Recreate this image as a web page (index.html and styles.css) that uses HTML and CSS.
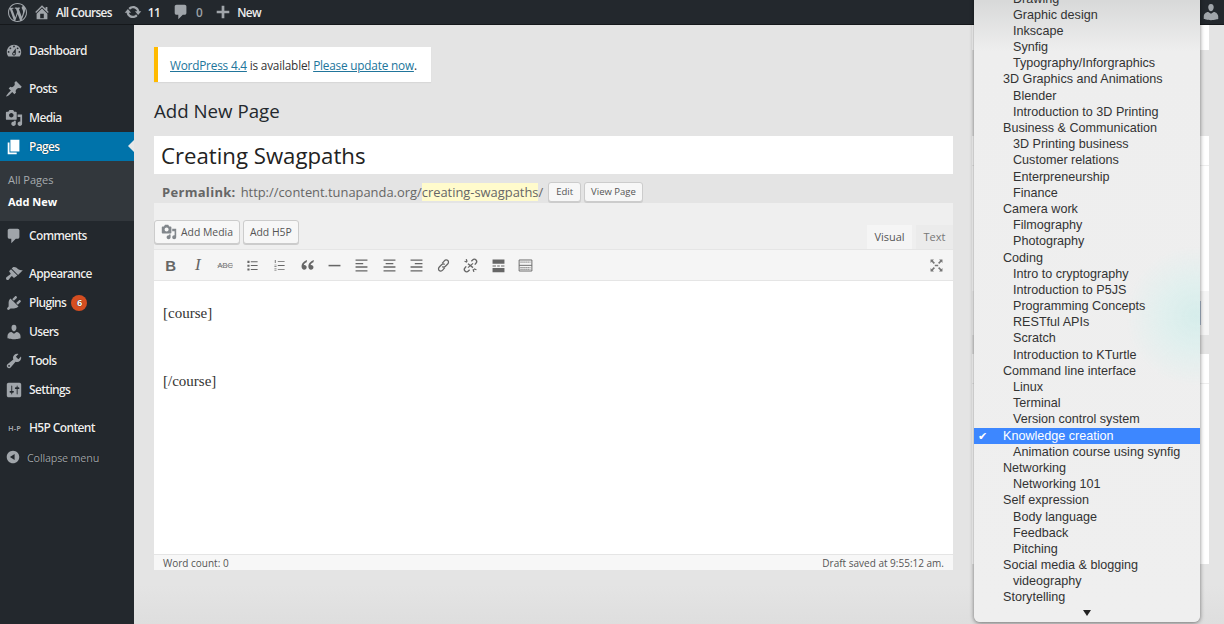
FILE: index.html
```html
<!DOCTYPE html>
<html lang="en">
<head>
<meta charset="utf-8">
<title>Add New Page</title>
<link rel="stylesheet" href="styles.css">
</head>
<body>
<svg class="defs" width="0" height="0" aria-hidden="true">
  <symbol id="i-media" viewBox="0 0 20 20"><path d="M13 11V4c0-.55-.45-1-1-1h-1.67L9 1H5L3.67 3H2c-.55 0-1 .45-1 1v7c0 .55.45 1 1 1h10c.55 0 1-.45 1-1zM7 4.5c1.38 0 2.5 1.12 2.5 2.5S8.38 9.5 7 9.5 4.5 8.38 4.5 7 5.62 4.5 7 4.5zM14 6h5v10.5c0 1.38-1.12 2.5-2.5 2.5S14 17.88 14 16.5s1.12-2.5 2.5-2.5c.17 0 .34.02.5.05V9h-3V6zm-4 8.05V13h2v3.5c0 1.38-1.12 2.5-2.5 2.5S7 17.88 7 16.5 8.12 14 9.5 14c.17 0 .34.02.5.05z"/></symbol>
  <symbol id="i-user" viewBox="0 0 20 20"><path d="M10 9.25c-2.27 0-2.73-3.44-2.73-3.44C7 4.02 7.82 2 9.97 2c2.16 0 2.98 2.02 2.71 3.81 0 0-.41 3.44-2.68 3.44zm0 2.57L12.72 10c2.39 0 4.52 2.33 4.52 4.53v2.49s-3.65 1.13-7.24 1.13c-3.65 0-7.24-1.13-7.24-1.13v-2.49c0-2.25 1.94-4.48 4.47-4.48z"/></symbol>
</svg>
<header class="adminbar">
  <span class="ab-item ab-logo"><svg class="ab-icon" viewBox="0 0 20 20"><path d="M20 10c0-5.51-4.49-10-10-10C4.48 0 0 4.49 0 10c0 5.52 4.48 10 10 10 5.51 0 10-4.48 10-10zM7.78 15.37L4.37 6.22c.55-.02 1.17-.08 1.17-.08.5-.06.44-1.13-.06-1.11 0 0-1.45.11-2.37.11-.18 0-.37 0-.58-.01C4.12 2.69 6.87 1.11 10 1.11c2.33 0 4.45.87 6.05 2.34-.68-.11-1.65.39-1.65 1.58 0 .74.45 1.36.9 2.1.35.61.55 1.36.55 2.46 0 1.49-1.4 5-1.4 5l-3.03-8.37c.54-.02.82-.17.82-.17.5-.05.44-1.25-.06-1.22 0 0-1.44.12-2.38.12-.87 0-2.33-.12-2.33-.12-.5-.03-.56 1.2-.06 1.22l.92.08 1.26 3.41zM17.41 10c.24-.64.74-1.87.43-4.25.7 1.29 1.05 2.71 1.05 4.25 0 3.29-1.73 6.24-4.4 7.78.97-2.59 1.94-5.2 2.92-7.78zM6.1 18.09C3.12 16.65 1.11 13.53 1.11 10c0-1.3.23-2.48.72-3.59C3.25 10.3 4.67 14.2 6.1 18.09zm4.03-6.63l2.58 6.98c-.86.29-1.76.45-2.71.45-.79 0-1.57-.11-2.29-.33.81-2.38 1.62-4.74 2.42-7.1z"/></svg></span>
  <span class="ab-item ab-site"><svg class="ab-icon" viewBox="0 0 20 20"><path d="M16 8.5l1.53 1.53-1.06 1.06L10 4.62l-6.47 6.47-1.06-1.06L10 2.5l4 4v-2h2v4zm-6-2.46l6 5.99V18H4v-5.97zM12 17v-5H8v5h4z"/></svg><b>All Courses</b></span>
  <span class="ab-item ab-updates"><svg class="ab-icon" viewBox="0 0 20 20"><path d="M10.2 3.28c3.53 0 6.43 2.61 6.92 6h2.08l-3.5 4-3.5-4h2.32c-.45-1.97-2.21-3.45-4.32-3.45-1.45 0-2.73.71-3.54 1.78L4.95 5.66C6.23 4.2 8.11 3.28 10.2 3.28zm-.4 13.44c-3.52 0-6.43-2.61-6.92-6H.8l3.5-4c1.17 1.33 2.33 2.67 3.5 4H5.48c.45 1.97 2.21 3.45 4.32 3.45 1.45 0 2.73-.71 3.54-1.78l1.71 1.95c-1.28 1.46-3.15 2.38-5.25 2.38z"/></svg><b>11</b></span>
  <span class="ab-item ab-comments"><svg class="ab-icon" viewBox="0 0 20 20"><path d="M5 2h9c1.1 0 2 .9 2 2v7c0 1.1-.9 2-2 2h-2l-5 5v-5H5c-1.1 0-2-.9-2-2V4c0-1.1.9-2 2-2z"/></svg><b class="dim">0</b></span>
  <span class="ab-item ab-new"><svg class="ab-icon" viewBox="0 0 20 20"><path d="M17 8.5v3h-5.5V17h-3v-5.5H3v-3h5.5V3h3v5.5H17z"/></svg><b>New</b></span>
  <span class="ab-spacer"></span>
  <svg class="ab-icon ab-user"><use href="#i-user"/></svg>
</header>
<div class="shell">
  <nav class="sidebar">
    <a class="menu"><svg class="m-icon" viewBox="0 0 20 20"><path d="M3.76 16h12.48c1.1-1.37 1.76-3.11 1.76-5 0-4.42-3.58-8-8-8s-8 3.58-8 8c0 1.89.66 3.63 1.76 5zM10 4c.55 0 1 .45 1 1s-.45 1-1 1-1-.45-1-1 .45-1 1-1zM6 6c.55 0 1 .45 1 1s-.45 1-1 1-1-.45-1-1 .45-1 1-1zm8 0c.55 0 1 .45 1 1s-.45 1-1 1-1-.45-1-1 .45-1 1-1zm-5.37 5.55L12 7v6c0 1.1-.9 2-2 2s-2-.9-2-2c0-.57.24-1.08.63-1.45zM4 10c.55 0 1 .45 1 1s-.45 1-1 1-1-.45-1-1 .45-1 1-1zm12 0c.55 0 1 .45 1 1s-.45 1-1 1-1-.45-1-1 .45-1 1-1zm-5 3c0-.55-.45-1-1-1s-1 .45-1 1 .45 1 1 1 1-.45 1-1z"/></svg>Dashboard</a>
    <div class="sep"></div>
    <a class="menu"><svg class="m-icon" viewBox="0 0 20 20"><path d="M10.44 3.02l1.82-1.82 6.36 6.35-1.83 1.82c-1.05-.68-2.48-.57-3.41.36l-.75.75c-.92.93-1.04 2.35-.35 3.41l-1.83 1.82-2.41-2.41-2.8 2.79c-.42.42-3.38 2.71-3.8 2.29s1.86-3.39 2.28-3.81l2.79-2.79L4.1 9.36l1.83-1.82c1.05.69 2.48.57 3.4-.36l.75-.75c.93-.92 1.05-2.35.36-3.41z"/></svg>Posts</a>
    <a class="menu"><svg class="m-icon"><use href="#i-media"/></svg>Media</a>
    <a class="menu current"><svg class="m-icon" viewBox="0 0 20 20"><path d="M6 15V2h10v13H6zm-1 1h8v2H3V5h2v11z"/></svg>Pages</a>
    <div class="submenu">
      <a class="sub">All Pages</a>
      <a class="sub active">Add New</a>
    </div>
    <a class="menu"><svg class="m-icon" viewBox="0 0 20 20"><path d="M5 2h9c1.1 0 2 .9 2 2v7c0 1.1-.9 2-2 2h-2l-5 5v-5H5c-1.1 0-2-.9-2-2V4c0-1.1.9-2 2-2z"/></svg>Comments</a>
    <div class="sep"></div>
    <a class="menu"><svg class="m-icon" viewBox="0 0 20 20"><path d="M14.48 11.06L7.41 3.99l1.5-1.5c.5-.56 2.3-.47 3.51.32 1.21.8 1.43 1.28 2.91 2.1 1.18.64 2.45 1.26 4.45.85zm-.71.71L6.7 4.7 4.93 6.47c-.39.39-.39 1.02 0 1.41l1.06 1.06c.39.39.39 1.03 0 1.42-.6.6-1.43 1.11-2.21 1.69-.35.26-.7.53-1.01.84C1.43 13.23.4 14.96 1.69 16.25c.8.8 1.8.6 2.6-.2.31-.31.58-.66.84-1.01.58-.78 1.09-1.61 1.69-2.21.39-.39 1.03-.39 1.42 0l1.06 1.06c.39.39 1.02.39 1.41 0z"/></svg>Appearance</a>
    <a class="menu"><svg class="m-icon" viewBox="0 0 20 20"><path d="M13.11 4.36L9.87 7.6 8 5.73l3.24-3.24c.35-.34 1.05-.2 1.56.32.52.51.66 1.21.31 1.55zm-8 1.77l.91-1.12 9.01 9.01-1.19.84c-.71.71-2.63 1.16-3.82 1.16H6.14L4.9 17.26c-.59.59-1.54.59-2.12 0-.59-.58-.59-1.53 0-2.12l1.24-1.24v-3.88c0-1.13.4-3.19 1.09-3.89zm7.26 3.97l3.24-3.24c.34-.35 1.04-.21 1.55.31.52.51.66 1.21.31 1.55l-3.24 3.25z"/></svg>Plugins<span class="badge">6</span></a>
    <a class="menu"><svg class="m-icon"><use href="#i-user"/></svg>Users</a>
    <a class="menu"><svg class="m-icon" viewBox="0 0 20 20"><path d="M16.68 9.77c-1.34 1.34-3.3 1.67-4.95.99l-5.41 6.52c-.99.99-2.59.99-3.58 0s-.99-2.59 0-3.57l6.52-5.42c-.68-1.65-.35-3.61.99-4.95 1.28-1.28 3.12-1.62 4.72-1.06l-2.89 2.89 2.82 2.82 2.86-2.87c.53 1.58.18 3.39-1.08 4.65zM3.81 16.21c.4.39 1.04.39 1.43 0 .4-.4.4-1.04 0-1.43-.39-.4-1.03-.4-1.43 0-.39.39-.39 1.03 0 1.43z"/></svg>Tools</a>
    <a class="menu"><svg class="m-icon" viewBox="0 0 20 20"><path d="M18 16V4c0-1.1-.9-2-2-2H4c-1.1 0-2 .9-2 2v12c0 1.1.9 2 2 2h12c1.1 0 2-.9 2-2zM8 11h1c.55 0 1 .45 1 1s-.45 1-1 1H8v1.5c0 .28-.22.5-.5.5s-.5-.22-.5-.5V13H6c-.55 0-1-.45-1-1s.45-1 1-1h1V5.5c0-.28.22-.5.5-.5s.5.22.5.5V11zm5-2h-1c-.55 0-1-.45-1-1s.45-1 1-1h1V5.5c0-.28.22-.5.5-.5s.5.22.5.5V7h1c.55 0 1 .45 1 1s-.45 1-1 1h-1v5.5c0 .28-.22.5-.5.5s-.5-.22-.5-.5V9z"/></svg>Settings</a>
    <div class="sep"></div>
    <a class="menu"><span class="h5p-mark">H-P</span>H5P Content</a>
    <a class="menu collapse"><svg class="m-icon" viewBox="0 0 20 20"><path d="M10 2.16c4.33 0 7.84 3.51 7.84 7.84s-3.51 7.84-7.84 7.84S2.16 14.33 2.16 10 5.71 2.16 10 2.16zm2 11.72V6.12L6.18 9.97z"/></svg>Collapse menu</a>
  </nav>
  <main class="main">
    <section class="editor-col">
      <div class="notice"><a>WordPress 4.4</a> is available! <a>Please update now</a>.</div>
      <h1 class="page-title">Add New Page</h1>
      <div class="title-input">Creating Swagpaths</div>
      <div class="permalink"><strong>Permalink:</strong><span class="url">http://content.tunapanda.org/<span class="slug">creating-swagpaths</span>/</span><span class="btn-s btn-edit">Edit</span><span class="btn-s">View Page</span></div>
      <div class="editor">
        <div class="editor-head">
          <span class="btn"><svg class="btn-icon"><use href="#i-media"/></svg>Add Media</span>
          <span class="btn">Add H5P</span>
          <span class="tabs"><span class="tab on">Visual</span><span class="tab">Text</span></span>
        </div>
        <div class="toolbar">
          <span class="tool t-b">B</span>
          <span class="tool t-i">I</span>
          <span class="tool t-abc">ABC</span>
          <span class="tool"><svg class="t-svg" viewBox="0 0 20 20"><path d="M8 5h8v1.200H8zM8 9.500h8v1.200H8zM8 14h8v1.200H8zM4 4.500h2.500V7H4zM4 9h2.500v2.500H4zM4 13.500h2.500V16H4z"/></svg></span>
          <span class="tool"><svg class="t-svg" viewBox="0 0 20 20"><path d="M8 5h8v1H8zM8 9.500h8v1H8zM8 14h8v1H8zM4.500 3.500h1v3.500h-1zM4 9h2.500v.8H4zM4 11h2.500v.8H4zM4 13.500h2.500v.8H4zM4 15.500h2.500v.8H4z"/></svg></span>
          <span class="tool"><svg class="t-svg" viewBox="0 0 20 20"><path d="M9.500 3.500C6 4.800 3 7.300 3 11.300c0 2.300 1.300 3.700 3.100 3.700 1.700 0 2.900-1.200 2.900-2.800s-1.100-2.700-2.700-2.700c-.2 0-.5 0-.7.100.2-1.300 1.500-2.500 3.400-3.300zM17.500 3.500c-3.500 1.300-6.500 3.800-6.500 7.800 0 2.300 1.300 3.700 3.100 3.700 1.700 0 2.900-1.200 2.900-2.800s-1.100-2.700-2.700-2.700c-.2 0-.5 0-.7.100.2-1.300 1.500-2.500 3.400-3.300z"/></svg></span>
          <span class="tool"><svg class="t-svg" viewBox="0 0 20 20"><path d="M3 9.200h14v1.800H3z"/></svg></span>
          <span class="tool"><svg class="t-svg" viewBox="0 0 20 20"><path d="M3 3h14v1.500H3zM3 7h9v1.500H3zM3 11h14v1.500H3zM3 15.500h14V17H3z"/></svg></span>
          <span class="tool"><svg class="t-svg" viewBox="0 0 20 20"><path d="M3 3h14v1.500H3zM5.500 7h9v1.500h-9zM3 11h14v1.500H3zM3 15.500h14V17H3z"/></svg></span>
          <span class="tool"><svg class="t-svg" viewBox="0 0 20 20"><path d="M3 3h14v1.500H3zM8 7h9v1.500H8zM3 11h14v1.500H3zM3 15.500h14V17H3z"/></svg></span>
          <span class="tool"><svg class="t-svg t-line" viewBox="0 0 20 20"><path d="M8.500 7.500l2.500-3c1.200-1.300 3-1.400 4.100-.3s1 2.900-.2 4.100l-2.600 2.600c-1.200 1.200-2.700 1.200-3.700.2"/><path d="M11.500 12.500l-2.500 3c-1.200 1.300-3 1.400-4.100.3s-1-2.900.2-4.100l2.600-2.600c1.200-1.200 2.700-1.200 3.700-.2"/></svg></span>
          <span class="tool"><svg class="t-svg t-line" viewBox="0 0 20 20"><path d="M11 5l1.500-1.500c1.200-1.200 2.900-1.200 4 0s1 2.800-.1 3.900L15 9"/><path d="M9 15l-1.500 1.500c-1.200 1.200-2.900 1.200-4 0s-1-2.800.1-3.900L5 11"/><path d="M3 5l3 1M5 2.500l1 3M14 17.500l-1-3M17 15l-3-1M7 8l6 4.500M13 7.500l-6 5"/></svg></span>
          <span class="tool"><svg class="t-svg" viewBox="0 0 20 20"><path d="M3 3h14v5H3zM3 13h14v5H3zM3 10h4v1.200H3zM8.500 10h3v1.200h-3zM13 10h4v1.200h-4z"/></svg></span>
          <span class="tool"><svg class="t-svg t-thin" viewBox="0 0 20 20"><path d="M2.500 3.500h15v13h-15z"/><path d="M2.500 9.800h15"/><path d="M4 6h12M4 12.500h12M4 14.500h12" stroke-dasharray="1.500 .8"/></svg></span>
          <span class="tool tool-full"><svg class="t-svg" viewBox="0 0 20 20"><path d="M3 3h4l-1.300 1.300 2.500 2.500-1.400 1.400-2.500-2.500L3 7zM17 3v4l-1.300-1.300-2.500 2.500-1.400-1.400 2.500-2.500L13 3zM3 17v-4l1.300 1.300 2.500-2.500 1.400 1.400-2.500 2.500L7 17zM17 17h-4l1.300-1.300-2.500-2.500 1.400-1.400 2.500 2.500L17 13zM8 9h4v2H8z"/></svg></span>
        </div>
        <div class="content">
          <p>[course]</p>
          <p class="gap">[/course]</p>
        </div>
        <div class="status"><span>Word count: 0</span><span>Draft saved at 9:55:12 am.</span></div>
      </div>
    </section>
    <aside class="side-col">
      <div class="box box-a"></div>
      <div class="box box-b"><div class="box-head"></div></div>
      <div class="box box-c"><span class="side-btn"></span></div>
      <div class="box box-d"><div class="box-head"></div></div>
    </aside>
  </main>
</div>
<div class="dropdown">
  <div class="opt c">Drawing</div>
  <div class="opt c">Graphic design</div>
  <div class="opt c">Inkscape</div>
  <div class="opt c">Synfig</div>
  <div class="opt c">Typography/Inforgraphics</div>
  <div class="opt">3D Graphics and Animations</div>
  <div class="opt c">Blender</div>
  <div class="opt c">Introduction to 3D Printing</div>
  <div class="opt">Business &amp; Communication</div>
  <div class="opt c">3D Printing business</div>
  <div class="opt c">Customer relations</div>
  <div class="opt c">Enterpreneurship</div>
  <div class="opt c">Finance</div>
  <div class="opt">Camera work</div>
  <div class="opt c">Filmography</div>
  <div class="opt c">Photography</div>
  <div class="opt">Coding</div>
  <div class="opt c">Intro to cryptography</div>
  <div class="opt c">Introduction to P5JS</div>
  <div class="opt c">Programming Concepts</div>
  <div class="opt c">RESTful APIs</div>
  <div class="opt c">Scratch</div>
  <div class="opt c">Introduction to KTurtle</div>
  <div class="opt">Command line interface</div>
  <div class="opt c">Linux</div>
  <div class="opt c">Terminal</div>
  <div class="opt c">Version control system</div>
  <div class="opt sel"><span class="check">✔</span>Knowledge creation</div>
  <div class="opt c">Animation course using synfig</div>
  <div class="opt">Networking</div>
  <div class="opt c">Networking 101</div>
  <div class="opt">Self expression</div>
  <div class="opt c">Body language</div>
  <div class="opt c">Feedback</div>
  <div class="opt c">Pitching</div>
  <div class="opt">Social media &amp; blogging</div>
  <div class="opt c">videography</div>
  <div class="opt">Storytelling</div>
  <div class="more"><span class="arrow"></span></div>
</div>
</body>
</html>
```

FILE: styles.css
```css
* { box-sizing: border-box; }
html, body { margin: 0; height: 624px; overflow: hidden; }
body {
  position: relative;
  display: flex;
  flex-direction: column;
  background: #e3e3e3;
  font-family: "Open Sans", sans-serif;
  font-size: 13px;
  color: #444;
}
.defs { position: absolute; }

/* admin bar */
.adminbar {
  flex: none;
  height: 25px;
  display: flex;
  align-items: center;
  background: #23282d;
  border-bottom: 1px solid #15181b;
  color: #eee;
  font-size: 11.800px;
  letter-spacing: -.650px;
}
.adminbar b { font-weight: 600; }
.adminbar .dim { color: #9ca1a6; }
.ab-item { display: flex; align-items: center; }
.ab-icon { width: 18px; height: 18px; fill: #a0a5aa; flex: none; }
.ab-logo { margin-left: 8px; }
.ab-logo .ab-icon { width: 19px; height: 19px; }
.ab-site { margin-left: 6px; gap: 5px; }
.ab-updates { margin-left: 12px; gap: 6px; }
.ab-comments { margin-left: 12px; gap: 6px; }
.ab-new { margin-left: 12px; gap: 5px; }
.ab-spacer { flex: 1; }
.ab-user { margin-right: 3px; width: 20px; height: 20px; }

.shell { flex: 1; display: flex; min-height: 0; }

/* sidebar */
.sidebar {
  flex: none;
  width: 134px;
  padding-top: 11px;
  background: #23282d;
  color: #eee;
}
.menu {
  position: relative;
  display: flex;
  align-items: center;
  height: 29px;
  font-size: 12px;
  font-weight: 600;
  letter-spacing: -.650px;
  text-shadow: 0 0 1px #000;
}
.m-icon { width: 18px; height: 18px; margin: 0 6px 0 5px; fill: #a0a5aa; flex: none; }
.sep { height: 9px; }
.menu.current { background: #0073aa; color: #fff; }
.menu.current .m-icon { fill: #fff; }
.menu.current::after {
  content: "";
  position: absolute;
  right: 0;
  top: 8px;
  border: 6px solid transparent;
  border-left-width: 0;
  border-right-color: #e8e8e8;
}
.submenu {
  height: 60px;
  padding-top: 7px;
  background: #32373c;
}
.sub {
  display: flex;
  align-items: center;
  height: 22px;
  padding-left: 8px;
  font-size: 11px;
  color: #a6abaf;
}
.sub.active { color: #fff; font-weight: 700; }
.badge {
  display: flex;
  align-items: center;
  justify-content: center;
  width: 16px;
  height: 16px;
  margin-left: 5px;
  border-radius: 50%;
  background: #d54e21;
  color: #fff;
  font-size: 9px;
  font-weight: 700;
}
.h5p-mark {
  flex: none;
  width: 21px;
  margin-left: 8px;
  font-size: 7.500px;
  font-weight: 700;
  letter-spacing: 0;
  color: #a0a5aa;
}
.collapse { height: 30px; font-size: 10.800px; font-weight: 400; letter-spacing: -.2px; color: #a0a5aa; }
.collapse .m-icon { margin: 0 6px 0 5px; width: 16px; height: 16px; }

/* main */
.main {
  flex: 1;
  display: flex;
  min-width: 0;
  padding-left: 20px;
  gap: 19px;
  background: linear-gradient(#e4e4e4, #e4e4e4 560px, #dedede);
}
.editor-col { flex: none; width: 799px; padding-top: 22px; }
.notice {
  width: 277px;
  height: 35px;
  line-height: 36px;
  padding-left: 12px;
  background: #fff;
  border-left: 4px solid #ffba00;
  font-size: 11.800px;
  letter-spacing: -.200px;
  white-space: nowrap;
  color: #333;
  box-shadow: 0 1px 1px rgba(0,0,0,.05);
}
.notice a { color: #21759b; text-decoration: underline; }
.page-title {
  margin: 15px 0 12px;
  height: 27px;
  line-height: 27px;
  font-size: 18.700px;
  font-weight: 400;
  color: #23282d;
}
.title-input {
  height: 38px;
  line-height: 39px;
  padding-left: 7px;
  background: #fff;
  font-size: 22.200px;
  color: #222;
}
.permalink {
  display: flex;
  align-items: center;
  height: 23px;
  margin-top: 6px;
  padding-left: 8px;
  font-size: 13px;
  color: #666;
}
.permalink strong { margin-right: 5px; letter-spacing: .3px; }
.url { font-size: 12.900px; }
.slug { background: #fffbcc; }
.btn-s {
  display: flex;
  align-items: center;
  height: 20px;
  margin-left: 3px;
  padding: 0 6px;
  background: #f7f7f7;
  border: 1px solid #ccc;
  border-radius: 3px;
  font-size: 9.500px;
  color: #555;
  box-shadow: 0 1px 0 #ccc;
}
.btn-edit { margin-left: 5px; padding: 0 7px; }
.editor { background: #efefef; height: 367px; display: flex; flex-direction: column; }
.editor-head {
  display: flex;
  align-items: flex-end;
  flex: none;
  height: 46px;
  gap: 3px;
  padding-bottom: 5px;
}
.btn {
  display: flex;
  align-items: center;
  height: 24px;
  padding: 0 6px;
  background: #f7f7f7;
  border: 1px solid #ccc;
  border-radius: 3px;
  font-size: 10.400px;
  color: #555;
  box-shadow: 0 1px 0 #ccc;
}
.btn-icon { width: 16px; height: 16px; margin-right: 4px; fill: #82878c; }
.tabs { margin-left: auto; display: flex; margin-bottom: -5px; gap: 4px; }
.tab {
  width: 37px;
  height: 24px;
  line-height: 24px;
  text-align: center;
  font-size: 11px;
  color: #777;
  background: #ebebeb;
}
.tab.on { width: 45px; background: #f5f5f5; color: #555; }
.toolbar {
  flex: none;
  display: flex;
  align-items: center;
  height: 32px;
  padding-left: 3px;
  background: #f5f5f5;
  border-top: 1px solid #e5e5e5;
  border-bottom: 1px solid #e5e5e5;
  color: #666;
}
.tool {
  flex: none;
  width: 27.300px;
  display: flex;
  align-items: center;
  justify-content: center;
}
.t-svg { width: 17px; height: 17px; fill: currentColor; }
.t-line { fill: none; stroke: currentColor; stroke-width: 1.500; }
.t-thin { fill: none; stroke: currentColor; stroke-width: 1.100; }
.t-b { font: 700 15px "Liberation Sans", sans-serif; }
.t-i { font: italic 400 17px "Liberation Serif", serif; }
.t-abc { font: 400 7.500px "Liberation Sans", sans-serif; text-decoration: line-through; text-decoration-color: #aaa; }
.tool-full { margin-left: auto; margin-right: 3px; color: #777; }
.content {
  flex: 1;
  padding: 23px 9px 0;
  background: #fff;
  font: 15px/18px "Liberation Serif", serif;
  color: #333;
}
.content p { margin: 0; }
.content .gap { margin-top: 50px; }
.status {
  flex: none;
  height: 16px;
  display: flex;
  justify-content: space-between;
  align-items: center;
  padding: 0 9px;
  background: #f7f7f7;
  border-top: 1px solid #e5e5e5;
  font-size: 10px;
  color: #555;
}

/* right column */
.side-col { flex: none; width: 237px; display: flex; flex-direction: column; }
.box { background: #fff; flex: none; }
.box-a { height: 25px; }
.box-b { height: 155px; margin-top: 86px; }
.box-c { height: 44px; display: flex; justify-content: flex-end; align-items: center; padding-right: 8px; background: #f5f5f5; }
.side-btn { width: 10px; height: 24px; background: #a9b9cc; }
.box-d { height: 210px; margin-top: 19px; }
.box-head { height: 30px; background: #fff; border-bottom: 1px solid #eee; }

/* open select popup */
.dropdown {
  position: absolute;
  left: 974px;
  top: -9.500px;
  width: 226px;
  height: 631.500px;
  background: radial-gradient(circle 70px at 222px 325px, #d6edeb 0%, rgba(220,240,238,.75) 45%, rgba(240,240,240,0) 100%), linear-gradient(#d8d9d9 10px, #eeeeee 60px, #efefef);
  border-radius: 0 0 6px 6px;
  box-shadow: 0 1px 4px rgba(0,0,0,.5);
  font: 12.600px/16.200px "Liberation Sans", sans-serif;
  color: #333;
}
.opt { height: 16.200px; padding-left: 29px; white-space: nowrap; }
.opt.c { padding-left: 39px; }
.opt.sel { position: relative; background: #3d87ff; color: #fff; }
.check { position: absolute; left: 4px; top: 0; font-size: 11px; }
.more { height: 26px; display: flex; justify-content: center; padding-top: 4px; }
.arrow {
  width: 0;
  height: 0;
  border: 4.500px solid transparent;
  border-top: 6px solid #222;
  border-bottom: 0;
}
```
